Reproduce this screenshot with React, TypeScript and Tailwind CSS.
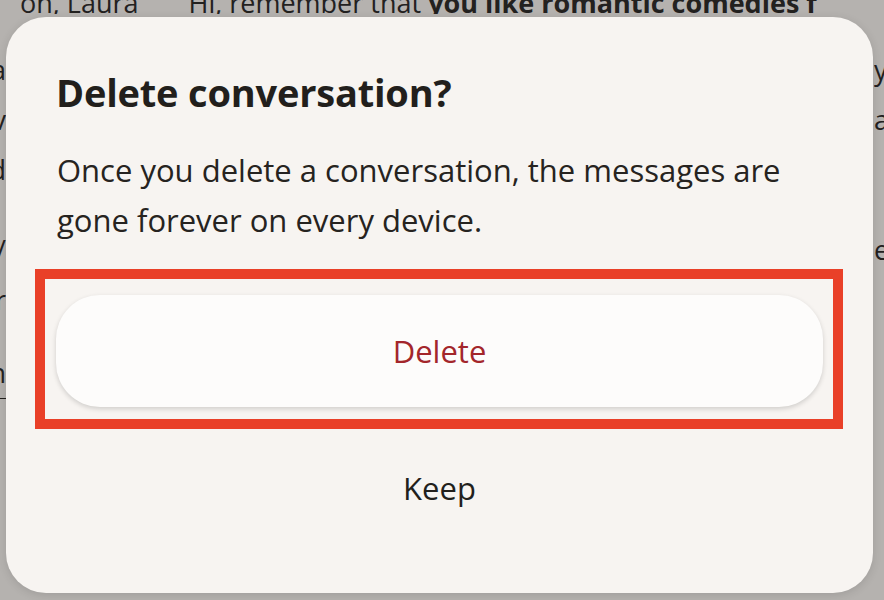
import React from "react";

const font = { fontFamily: "'Open Sans', 'Noto Sans', sans-serif" };

// chat lines peeking out on either side of the dialog
const sideRows = [
  { left: "Absolutely, I can help you find a", right: "you", gap: "mt-0" },
  { left: "few things to watch tonight. Vv", right: "and", gap: "mt-0" },
  { left: "Here is what I found for the weekend", right: "", gap: "mt-0" },
  { left: "Comedy / Drama /", right: "exp", gap: "mt-[30px]" },
  { left: "Sounds great, thanks for the suggestion. Our", right: "", gap: "mt-0" },
  { left: "Watch now on", right: "", gap: "mt-[23px]" },
];

function Backdrop() {
  return (
    <div className="flex flex-col text-[27px] text-[#23211f]">
      <div className="h-[14px] overflow-hidden flex items-end">
        <div className="whitespace-nowrap leading-none ml-[20px] -mb-[2px]">
          <span>on, Laura</span>
          <span className="ml-[50px]">Hi, remember that </span>
          <span className="font-bold">you like romantic comedies f</span>
        </div>
      </div>
      <div className="flex flex-col pt-[31px]">
        {sideRows.map((r, i) => (
          <div key={i} className={`flex justify-between h-[50px] items-center ${r.gap}`}>
            <div className="w-[6px] overflow-hidden flex justify-end">
              <span className="whitespace-nowrap">{r.left}</span>
            </div>
            <div className="w-[10px] overflow-hidden">
              <span className="whitespace-nowrap">{r.right}</span>
            </div>
          </div>
        ))}
        <div className="w-[18px] h-px bg-[#23211f]" />
      </div>
    </div>
  );
}

export default function App() {
  return (
    <div
      className="relative w-[884px] h-[600px] overflow-hidden bg-[#b5b2af]"
      style={font}
    >
      <Backdrop />

      <div className="absolute left-[6px] top-[17px] w-[867px] h-[576px] rounded-[40px] bg-[#f7f4f1] shadow-[0_2px_10px_rgba(0,0,0,0.12)] px-[50px] pt-[53px] pb-[49px] flex flex-col">
        <h2 className="text-[38px] leading-[44px] font-bold text-[#221f1c] tracking-[-0.2px]">
          Delete conversation?
        </h2>
        <p className="mt-[31px] text-[31px] leading-[50px] text-[#262320] pl-px max-w-[740px]">
          Once you delete a conversation, the messages are gone forever on
          every device.
        </p>

        <div className="relative mt-[50px]">
          <button className="w-full h-[112px] rounded-[44px] bg-[#fdfcfb] shadow-[0_2px_5px_rgba(0,0,0,0.16)] text-[31px] text-[#a3262b]">
            Delete
          </button>
          <div className="absolute -left-[21px] -right-[20px] -top-[26px] -bottom-[22px] border-[10px] border-[#e94028] pointer-events-none" />
        </div>

        <button className="mt-[25px] h-[112px] w-full text-[31px] text-[#221f1c]">
          Keep
        </button>
      </div>
    </div>
  );
}
